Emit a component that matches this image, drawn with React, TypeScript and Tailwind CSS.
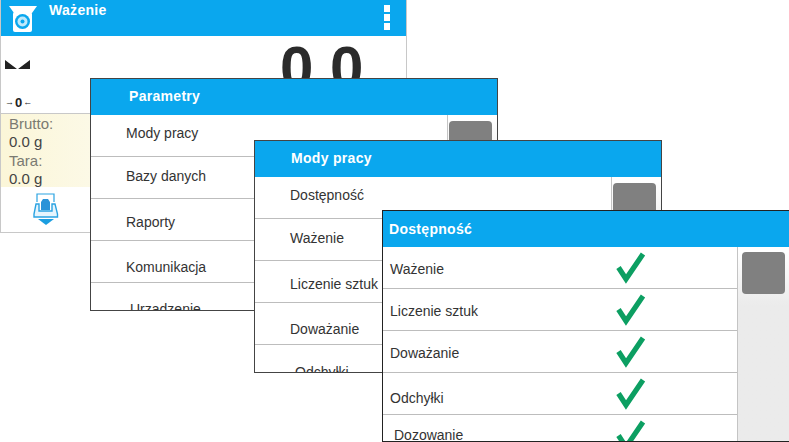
import React from 'react';

const font = { fontFamily: '"Liberation Sans", Arial, sans-serif' };

const Check = () => (
  <svg width="30" height="32" viewBox="0 0 30 32" className="shrink-0">
    <path d="M2.5 15.5 L10 27 L27 2" fill="none" stroke="#0c9f62" strokeWidth="5.2" strokeLinejoin="miter" />
  </svg>
);

const ScaleIcon = () => (
  <svg width="34" height="33" viewBox="0 0 34 33">
    <path d="M2 6 H30 L25 13 H7 Z" fill="#fff" />
    <rect x="6" y="12" width="19" height="20" rx="2" fill="#fff" />
    <circle cx="15.5" cy="21.5" r="7.5" fill="#0aa7ee" />
    <circle cx="15.5" cy="21.5" r="5" fill="#bfe9fb" />
    <circle cx="15.5" cy="21.5" r="2" fill="#0aa7ee" />
  </svg>
);

const TareIcon = () => (
  <svg width="26" height="33" viewBox="0 0 26 33">
    <path d="M4 9 V1 H21 V9" fill="none" stroke="#2aa3e2" strokeWidth="1.2" />
    <path d="M10 6 H15 L17 9 V17 H8 V9 Z" fill="#2a93d8" />
    <path d="M3 11 H6 V18 H19 V11 H22 L24.5 21 V24 H1 V21 Z" fill="#e6f5fd" stroke="#2aa3e2" strokeWidth="1.4" />
    <path d="M5 26 H21 L13 32 Z" fill="#1b9ee0" />
  </svg>
);

const Header = ({ title, className }: { title: string; className: string }) => (
  <div className={`h-9 shrink-0 bg-[#0aa7ee] text-white font-bold text-[14px] tracking-[0.3px] flex items-center ${className}`}>
    {title}
  </div>
);

const Scrollbar = ({ className = '' }: { className?: string }) => (
  <div className={`shrink-0 bg-linear-to-b from-white from-[4px] to-[#ebebeb] to-[30%] border-l border-[#c4c4c4] ${className}`}>
    <div className="w-[43px] h-[42px] rounded-[4px] bg-[#808080]" />
  </div>
);

type Row = { label: string; offset: string };

const paramRows: Row[] = [
  { label: 'Mody pracy', offset: 'pb-[4px]' },
  { label: 'Bazy danych', offset: 'pb-[2px]' },
  { label: 'Raporty', offset: 'pt-[6px]' },
  { label: 'Komunikacja', offset: 'pt-[12px]' },
  { label: 'Urządzenie', offset: 'pt-[12px] pl-[4px]' },
];

const modeRows: Row[] = [
  { label: 'Dostępność', offset: 'pb-[4px]' },
  { label: 'Ważenie', offset: 'pb-[2px]' },
  { label: 'Liczenie sztuk', offset: 'pt-[6px]' },
  { label: 'Doważanie', offset: 'pt-[12px]' },
  { label: 'Odchyłki', offset: 'pt-[14px] pl-[5px]' },
];

const availRows: Row[] = [
  { label: 'Ważenie', offset: 'pt-[4px]' },
  { label: 'Liczenie sztuk', offset: 'pt-[4px]' },
  { label: 'Doważanie', offset: 'pt-[4px]' },
  { label: 'Odchyłki', offset: 'pt-[10px]' },
  { label: 'Dozowanie', offset: 'pl-[4px]' },
];

const Rows = ({ items, pad, check }: { items: Row[]; pad: string; check?: boolean }) => (
  <div className="flex-1 min-w-0 overflow-hidden">
    {items.map((r) => (
      <div key={r.label} className={`h-[42px] flex items-center border-b border-[#bdbdbd] text-[14px] text-[#333] ${pad}`}>
        <div className={`${check ? 'w-[226px] shrink-0' : ''} whitespace-nowrap ${r.offset}`}>{r.label}</div>
        {check && <Check />}
      </div>
    ))}
  </div>
);

function Win({ pos, border, children }: { pos: string; border: string; children: React.ReactNode }) {
  return (
    <div className={`absolute ${pos} w-[408px] bg-white border ${border} flex flex-col overflow-hidden`}>
      {children}
    </div>
  );
}

export default function App() {
  return (
    <div className="relative w-[789px] h-[442px] bg-white overflow-hidden" style={font}>
      {/* Weighing screen */}
      <div className="absolute left-0 top-0 w-[407px] h-[233px] bg-white border-l border-r border-b border-[#c8c8c8] flex flex-col">
        <div className="h-9 shrink-0 bg-[#0aa7ee] flex justify-between pr-4 pl-[6px]">
          <div className="flex items-start gap-2 text-white font-bold text-[14px] tracking-[0.3px]">
            <ScaleIcon />
            <span>Ważenie</span>
          </div>
          <div className="flex flex-col gap-[2.5px] pt-[5px]">
            <div className="w-[6px] h-[6.5px] bg-white" />
            <div className="w-[6px] h-[6.5px] bg-white" />
            <div className="w-[6px] h-[6.5px] bg-white" />
          </div>
        </div>
        <div className="flex flex-1 min-h-0">
          <div className="w-[89px] shrink-0 flex flex-col">
            <div className="h-[78px] pl-[4px] flex flex-col border-b border-[#c8c8c8]">
              <svg width="26" height="10" viewBox="0 0 26 10" className="mt-[24px]">
                <path d="M0 0 L12 9 H0 Z M25 0 L13 9 H25 Z" fill="#222" />
              </svg>
              <div className="mt-[25px] flex items-center gap-[1px] h-[14px] text-[#222]">
                <span className="text-[9px] font-bold leading-none">→</span>
                <span className="text-[13px] font-bold leading-none">0</span>
                <span className="text-[9px] font-bold leading-none">←</span>
              </div>
            </div>
            <div className="h-[73px] bg-linear-to-r from-[#fbf6d8] to-[#fcf9e6] pl-[8px] text-[15px] leading-[18.3px] text-[#444] pt-[1px]">
              <div className="text-[#7a7a72]">Brutto:</div>
              <div>0.0 g</div>
              <div className="text-[#7a7a72]">Tara:</div>
              <div>0.0 g</div>
            </div>
            <div className="flex justify-center pt-[6px]">
              <TareIcon />
            </div>
          </div>
          <div className="flex-1 pl-[190px] text-[60px] font-bold leading-none text-[#2b2b2b] pt-[2px]">0.0</div>
        </div>
      </div>

      {/* Parameters */}
      <Win pos="left-[90px] top-[78px] h-[233px]" border="border-[#444]">
        <Header title="Parametry" className="pl-[38px] pb-[2px]" />
        <div className="flex flex-1 min-h-0">
          <Rows items={paramRows} pad="pl-[35px]" />
          <Scrollbar className="w-[50px] pt-[6px] pl-[1px]" />
        </div>
      </Win>

      {/* Work modes */}
      <Win pos="left-[254px] top-[140px] h-[233px]" border="border-[#444]">
        <Header title="Mody pracy" className="pl-[36px] pb-[2px]" />
        <div className="flex flex-1 min-h-0">
          <Rows items={modeRows} pad="pl-[35px]" />
          <Scrollbar className="w-[50px] pt-[6px] pl-[1px]" />
        </div>
      </Win>

      {/* Availability */}
      <Win pos="left-[382px] top-[210px] h-[232px]" border="border-[#222]">
        <Header title="Dostępność" className="pl-[6px]" />
        <div className="flex flex-1 min-h-0">
          <Rows items={availRows} pad="pl-[7px]" check />
          <Scrollbar className="w-[52px] pt-[5px] pl-[4px]" />
        </div>
      </Win>
    </div>
  );
}
